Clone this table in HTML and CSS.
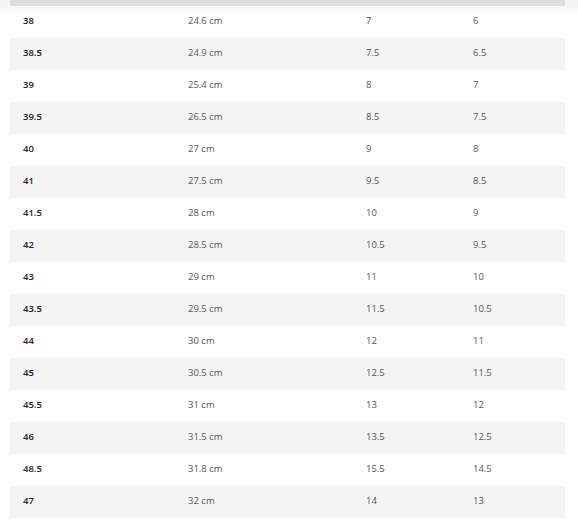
FILE: index.html
```html
<!DOCTYPE html>
<html>
<head>
<meta charset="utf-8">
<link rel="stylesheet" href="styles.css">
</head>
<body>
<div class="wrap">
  <div class="topbar"></div>
  <div class="table">
    <div class="row"><span class="c1">38</span><span>24.6 cm</span><span>7</span><span>6</span></div>
    <div class="row"><span class="c1">38.5</span><span>24.9 cm</span><span>7.5</span><span>6.5</span></div>
    <div class="row"><span class="c1">39</span><span>25.4 cm</span><span>8</span><span>7</span></div>
    <div class="row"><span class="c1">39.5</span><span>26.5 cm</span><span>8.5</span><span>7.5</span></div>
    <div class="row"><span class="c1">40</span><span>27 cm</span><span>9</span><span>8</span></div>
    <div class="row"><span class="c1">41</span><span>27.5 cm</span><span>9.5</span><span>8.5</span></div>
    <div class="row"><span class="c1">41.5</span><span>28 cm</span><span>10</span><span>9</span></div>
    <div class="row"><span class="c1">42</span><span>28.5 cm</span><span>10.5</span><span>9.5</span></div>
    <div class="row"><span class="c1">43</span><span>29 cm</span><span>11</span><span>10</span></div>
    <div class="row"><span class="c1">43.5</span><span>29.5 cm</span><span>11.5</span><span>10.5</span></div>
    <div class="row"><span class="c1">44</span><span>30 cm</span><span>12</span><span>11</span></div>
    <div class="row"><span class="c1">45</span><span>30.5 cm</span><span>12.5</span><span>11.5</span></div>
    <div class="row"><span class="c1">45.5</span><span>31 cm</span><span>13</span><span>12</span></div>
    <div class="row"><span class="c1">46</span><span>31.5 cm</span><span>13.5</span><span>12.5</span></div>
    <div class="row"><span class="c1">48.5</span><span>31.8 cm</span><span>15.5</span><span>14.5</span></div>
    <div class="row"><span class="c1">47</span><span>32 cm</span><span>14</span><span>13</span></div>
  </div>
</div>
</body>
</html>
```
FILE: styles.css
```css
html, body {
  margin: 0;
  padding: 0;
  background: #fff;
}
body {
  font-family: "Open Sans", "Liberation Sans", sans-serif;
  font-size: 9.5px;
  color: #555;
}
.wrap {
  background: linear-gradient(to bottom, #f3f3f3 0px, #ffffff 18px);
  padding: 0 13px 0 10px;
}
.topbar {
  width: 555px;
  height: 6px;
  background: #dedede;
}
.table {
  display: flex;
  flex-direction: column;
  width: 555px;
}
.row {
  display: grid;
  grid-template-columns: 165px 178px 107px 105px;
  height: 32px;
  box-sizing: border-box;
  padding-bottom: 3px;
  align-items: center;
}
.row:nth-child(even) {
  background: #f4f4f4;
}
.row span {
  padding-left: 13px;
  line-height: 12px;
}
.row .c1 {
  color: #222;
  font-weight: 600;
}
```
